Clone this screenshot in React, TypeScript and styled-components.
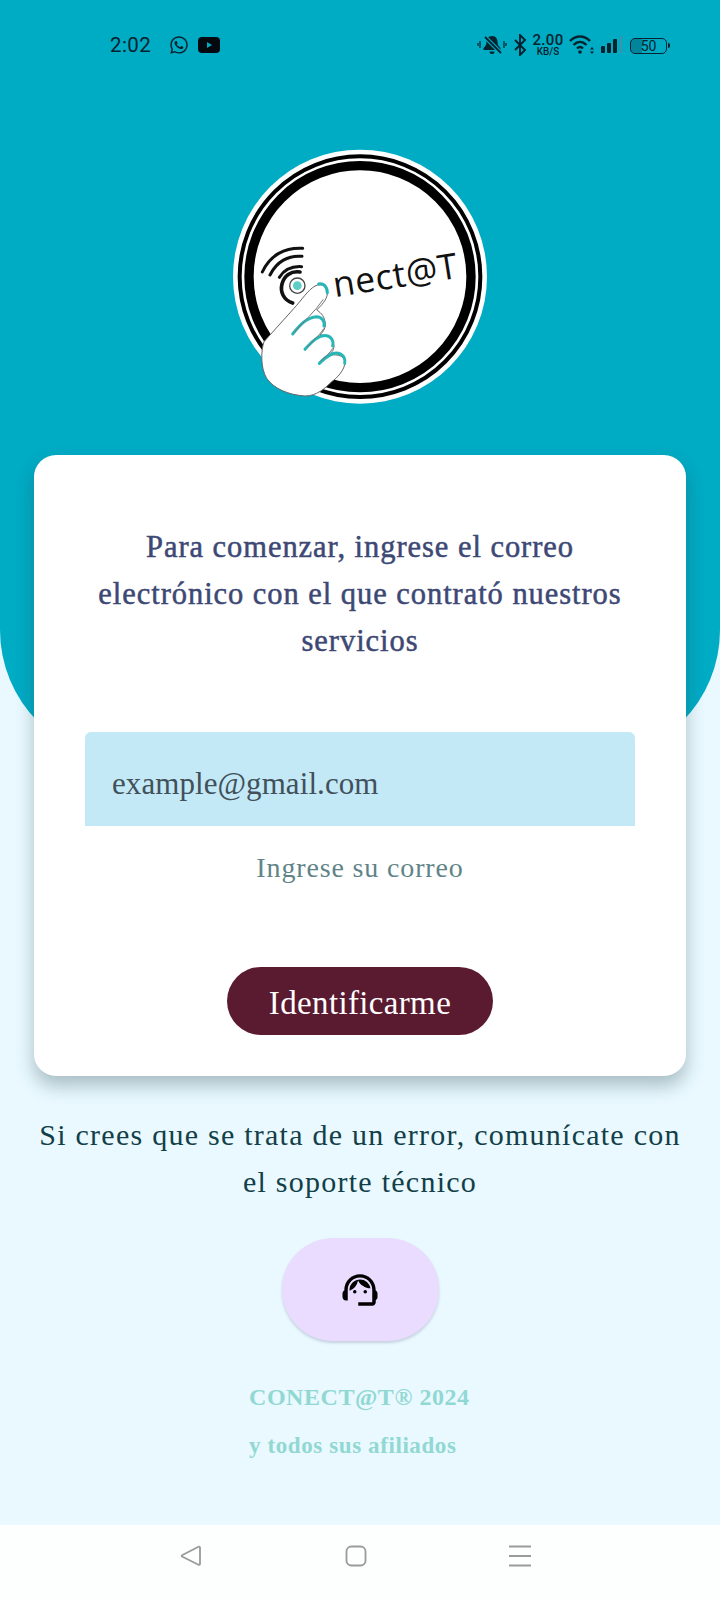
import React from "react";
import styled, { createGlobalStyle } from "styled-components";
import { MdOutlineSupportAgent } from "react-icons/md";
import { FaWhatsapp } from "react-icons/fa";

const Global = createGlobalStyle`
  html, body { margin: 0; padding: 0; background: #e9f9ff; }
  * { box-sizing: border-box; }
`;
const serif = `"Liberation Serif", "Times New Roman", serif`;

const Screen = styled.div`
  width: 720px; height: 1600px; display: flex; flex-direction: column;
  background: #e9f9ff; overflow: hidden; font-family: ${serif};
`;
const Header = styled.header`
  height: 760px; flex: none; background: #00abc4;
  border-radius: 0 0 130px 130px; display: flex; flex-direction: column; align-items: center;
`;
const StatusBar = styled.div`
  width: 100%; height: 140px; padding: 32px 53px 0 110px; display: flex;
  justify-content: space-between; align-items: flex-start; color: #06222e;
`;
const StatusGroup = styled.div`
  display: flex; align-items: center; height: 26px; gap: ${p => p.$gap}px;
`;
const Time = styled.span`
  font: 400 20.5px "Roboto", sans-serif; letter-spacing: .4px; margin-right: 9px;
`;
const Speed = styled.div`
  display: flex; flex-direction: column; align-items: center; font-family: "Roboto", sans-serif;
  font-weight: 500; line-height: 1; width: 30px;
`;
const SpeedValue = styled.span` font-size: 15px; line-height: 13px; letter-spacing: .3px; `;
const SpeedUnit = styled.span` font-size: 10px; line-height: 10px; `;
const Battery = styled.div`
  width: 37px; height: 16px; border: 1.5px solid #06222e; border-radius: 5px; margin-left: -1px; margin-top: 1px; position: relative;
  display: flex; align-items: center; justify-content: center; font: 400 14px "Roboto", sans-serif;
  background: linear-gradient(90deg, rgba(6, 60, 80, .35) 0 30%, transparent 30%);
  &::after { content: ""; position: absolute; right: -4px; top: 4px; width: 2px; height: 5px; background: #06222e; border-radius: 0 2px 2px 0; }
`;
const Logo = styled.svg` width: 280px; height: 280px; flex: none; display: block; `;

const Main = styled.main`
  flex: 1; margin-top: -305px; position: relative; display: flex; flex-direction: column; align-items: center;
`;
const Card = styled.section`
  width: 652px; height: 621px; background: #fff; border-radius: 22px; padding: 69px 51px 0;
  box-shadow: 0 10px 18px rgba(40, 70, 80, .33); display: flex; flex-direction: column; align-items: center;
`;
const Title = styled.h1`
  margin: 0; width: 550px; text-align: center; font-size: 30.5px; line-height: 47px; font-weight: 400; letter-spacing: .95px;
  color: #3d4875; -webkit-text-stroke: .5px #3d4875;
`;
const EmailBox = styled.div`
  width: 550px; height: 94px; margin-top: 67px; flex: none; background: #c3e9f7; border-radius: 6px 6px 0 0;
  padding: 10px 27px 0; display: flex; align-items: center; font-size: 31px; letter-spacing: .07px; color: #42505a;
`;
const Hint = styled.div`
  margin-top: 24px; font-size: 28px; line-height: 36px; letter-spacing: .85px; color: #5f8487;
`;
const SubmitButton = styled.button`
  margin-top: 81px; width: 266px; height: 68px; border: 0; border-radius: 34px; background: #5a1a2f;
  color: #fff; font-family: ${serif}; font-size: 33px; letter-spacing: .35px; padding: 4px 0 0;
`;
const HelpText = styled.p`
  margin: 35px 0 0; width: 660px; text-align: center; font-size: 30px; line-height: 47px; letter-spacing: 1.25px; color: #123f48;
`;
const SupportButton = styled.button`
  margin-top: 33px; width: 157px; height: 103px; border: 0; border-radius: 52px; background: #e9dcff;
  box-shadow: 0 2px 3px rgba(60, 50, 90, .2); display: flex; align-items: center; justify-content: center; padding: 0; color: #000;
`;
const Footer = styled.footer`
  margin-top: 42px; width: 222px; color: #91d8d3; display: flex; flex-direction: column; gap: 19px;
`;
const Brand = styled.div` font-size: 24px; line-height: 29px; font-weight: 700; white-space: nowrap; letter-spacing: .55px; `;
const Affiliates = styled.div` font-size: 23px; line-height: 29px; font-weight: 700; white-space: nowrap; letter-spacing: .6px; `;
const NavBar = styled.nav`
  height: 75px; flex: none; background: #fdfefe; display: flex; align-items: flex-start; padding-top: 20px;
`;
const NavSlot = styled.div`
  width: 20px; height: 20px; margin-left: ${p => p.$left}px; flex: none;
`;
const NavIcon = styled.svg` width: 22px; height: 22px; display: block; fill: none; stroke: #9a9a9a; stroke-width: 1.8; `;

const Whats = styled(FaWhatsapp)` width: 20px; height: 20px; color: #06222e; `;

export default function App() {
  return (
    <Screen>
      <Global />
      <Header>
        <StatusBar>
          <StatusGroup $gap={9}>
            <Time>2:02</Time>
            <Whats />
            <svg width="22" height="16" viewBox="0 0 22 16"><rect width="22" height="16" rx="4" fill="#03090f" /><path d="M9 5l5 3-5 3z" fill="#00abc4" /></svg>
          </StatusGroup>
          <StatusGroup $gap={6}>
            <svg width="30" height="22" viewBox="0 0 30 22">
              <path d="M15 2c-4 0-5.500 3-5.500 6 0 3-1.500 5-3 6v2h17v-2c-1.500-1-3-3-3-6 0-3-1.500-6-5.500-6zM12.500 17.500h5a2.500 2.500 0 0 1-5 0z" fill="#06222e" />
              <path d="M7 2l17 17" stroke="#00abc4" strokeWidth="4" />
              <path d="M8 3l16 16" stroke="#06222e" strokeWidth="1.800" />
              <path d="M3 7v7M1 9v3M27 7v7M29 9v3" stroke="#06222e" strokeWidth="1.200" />
            </svg>
            <svg width="14" height="22" viewBox="0 0 14 22" fill="none" stroke="#06222e" strokeWidth="1.900"><path d="M2 6l10 10-5 5V1l5 5L2 16" /></svg>
            <Speed><SpeedValue>2.00</SpeedValue><SpeedUnit>KB/S</SpeedUnit></Speed>
            <svg width="26" height="22" viewBox="0 0 26 22" fill="none" stroke="#06222e" strokeWidth="2.400">
              <path d="M1 7c6-6 14-6 20 0M4.500 11c4-4 9-4 13 0M8 14.500c2-2 4-2 6 0" />
              <circle cx="11" cy="18" r="1.800" fill="#06222e" stroke="none" />
              <path d="M23 13l2 2.500h-4zM23 20l2-2.500h-4z" fill="#06222e" stroke="none" />
            </svg>
            <svg width="24" height="18" viewBox="0 0 24 18">
              <rect x="0" y="10" width="4" height="7" rx="1" fill="#06222e" />
              <rect x="6" y="7" width="4" height="10" rx="1" fill="#06222e" />
              <rect x="12" y="3" width="4" height="14" rx="1" fill="#06222e" />
              <rect x="19" y="0" width="2" height="17" fill="#3f93a8" />
            </svg>
            <Battery>50</Battery>
          </StatusGroup>
        </StatusBar>
        <Logo viewBox="0 0 840 840" role="img" aria-label="Conect@T">
          <circle cx="420" cy="410" r="381" fill="#fff" />
          <circle cx="420" cy="410" r="361" fill="none" stroke="#000" strokeWidth="12" />
          <circle cx="420" cy="410" r="333" fill="none" stroke="#000" strokeWidth="28" />
          <g fill="none" stroke="#111" strokeLinecap="round">
            <path d="M127 396C150 345 195 322 248 325" strokeWidth="9" />
            <path d="M150 405C170 365 205 345 246 349" strokeWidth="9" />
            <path d="M178 412C192 390 215 378 245 380" strokeWidth="9" />
            <path d="M218 489C190 480 180 455 186 432C192 408 212 392 240 396" strokeWidth="11" />
            <circle cx="232" cy="437" r="23" strokeWidth="4" stroke="#444" />
          </g>
          <circle cx="232" cy="437" r="13" fill="#5ecdc8" />
          <text x="345" y="472" transform="rotate(-9 345 472)" fontFamily="'Open Sans', sans-serif" fontSize="106" fill="#111" letterSpacing="2">nect@T</text>
          <path d="M255 768C205 765 160 745 140 715C122 685 122 635 132 605L222 505C245 480 262 452 285 438C305 428 325 440 322 462C320 480 305 495 290 510C298 515 312 525 315 545C320 560 310 575 300 585C320 585 342 595 342 618C342 632 332 640 322 648C342 640 375 645 375 665C375 690 350 715 335 725C315 745 290 768 255 768Z" fill="#fff" stroke="#666" strokeWidth="3" />
          <g fill="none" stroke="#29b6b6" strokeWidth="9" strokeLinecap="round">
            <path d="M296 432C310 428 322 440 322 458" />
            <path d="M218 582C240 555 260 532 290 530C305 530 315 545 312 558" />
            <path d="M255 628C275 605 295 585 320 587C335 590 342 605 338 618" />
            <path d="M298 670C318 650 340 632 362 642C375 650 376 660 374 670" />
          </g>
          <g fill="none" stroke="#777" strokeWidth="3">
            <path d="M222 578C250 545 285 515 310 478" />
            <path d="M262 622C280 600 300 585 312 565" />
            <path d="M302 664C315 650 330 640 338 625" />
          </g>
        </Logo>
      </Header>
      <Main>
        <Card>
          <Title>Para comenzar, ingrese el correo electrónico con el que contrató nuestros servicios</Title>
          <EmailBox>example@gmail.com</EmailBox>
          <Hint>Ingrese su correo</Hint>
          <SubmitButton>Identificarme</SubmitButton>
        </Card>
        <HelpText>Si crees que se trata de un error, comunícate con el soporte técnico</HelpText>
        <SupportButton aria-label="Soporte"><MdOutlineSupportAgent size={42} /></SupportButton>
        <Footer>
          <Brand>CONECT@T® 2024</Brand>
          <Affiliates>y todos sus afiliados</Affiliates>
        </Footer>
      </Main>
      <NavBar>
        <NavSlot $left={180}>
          <NavIcon viewBox="0 0 22 22"><path d="M20 2.500v16.500a1 1 0 0 1-1.500.8L2 11.500a.8.8 0 0 1 0-1.200L18.500 1.800a1 1 0 0 1 1.500.7z" strokeLinejoin="round" /></NavIcon>
        </NavSlot>
        <NavSlot $left={145}>
          <NavIcon viewBox="0 0 22 22"><rect x="1.500" y="1.500" width="19" height="19" rx="5" /></NavIcon>
        </NavSlot>
        <NavSlot $left={144}>
          <NavIcon viewBox="0 0 22 22"><path d="M0 1.500h22M0 11h22M0 20.500h22" /></NavIcon>
        </NavSlot>
      </NavBar>
    </Screen>
  );
}
